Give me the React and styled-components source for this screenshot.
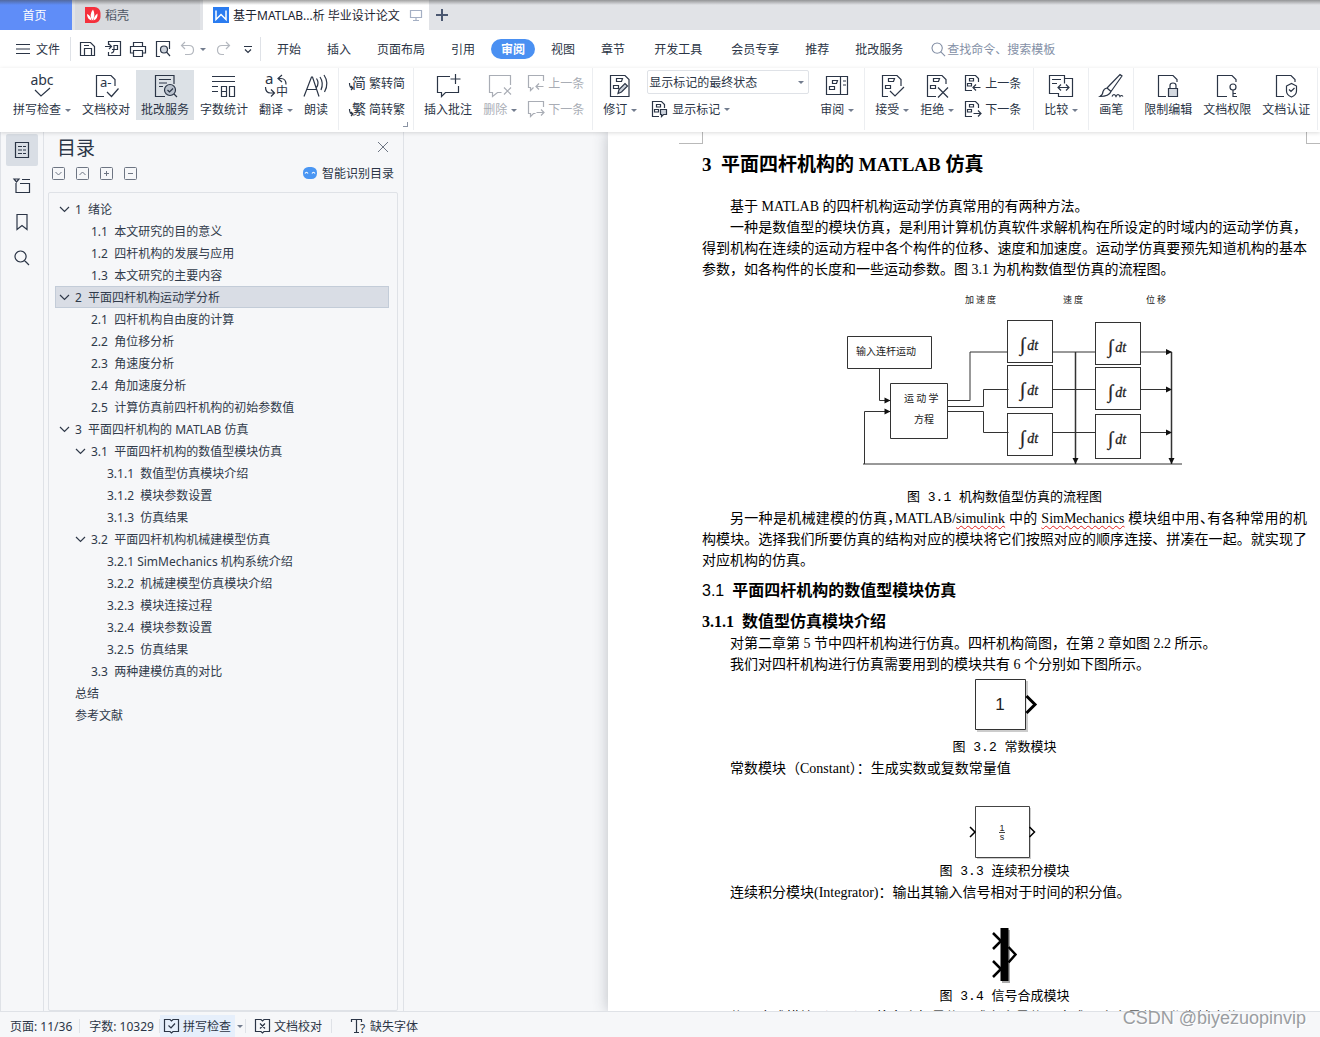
import React, { useState } from "react";
import styled, { createGlobalStyle } from "styled-components";

const ink = "#2b3546";
const line = "#dfe2e7";
const panelBg = "#f6f7f9";

const GlobalStyle = createGlobalStyle`
    * {
        box-sizing: border-box;
    }

    body {
        margin: 0;
        font-family: "Noto Sans", "Noto Sans CJK SC", sans-serif;
        font-size: 12px;
        color: ${ink};
    }

    button, input, select {
        font: inherit;
        color: inherit;
        margin: 0;
        padding: 0;
        border: 0;
        background: none;
    }
`;

const Window = styled.div`
    display: flex;
    flex-direction: column;
    height: 100vh;
    overflow: hidden;
    background: ${panelBg};
`;

const Icon = styled.svg`
    display: block;
    flex: none;
    fill: none;
    stroke: currentColor;
    stroke-width: ${({ $weight }) => $weight || 1.2};
    overflow: visible;

    text {
        fill: currentColor;
        stroke: none;
    }
`;

/* ---------- tabs ---------- */

const TabBar = styled.div`
    position: relative;
    display: flex;
    gap: 3px;
    height: 30px;
    flex: none;
    background: #e1e3e7;

    &::after {
        content: "";
        position: absolute;
        inset: 0 0 auto 0;
        height: 5px;
        background: linear-gradient(rgba(70, 70, 70, 0.5), rgba(70, 70, 70, 0));
        pointer-events: none;
    }
`;

const Tab = styled.button`
    display: flex;
    align-items: center;
    gap: 4px;
    padding: 0 7px 0 10px;
    width: ${({ $width }) => $width}px;
    white-space: nowrap;
    text-align: left;
    background: ${({ $active }) => ($active ? "#fff" : "#d8dade")};
    color: ${({ $active }) => ($active ? "#1c2430" : "#4d5563")};

    span {
        flex: 1;
    }
`;

const HomeTab = styled(Tab)`
    justify-content: center;
    padding: 0 6px 0 3px;
    background: #5f8df8;
    color: #fff;
`;

const NewTab = styled.button`
    display: flex;
    align-items: center;
    padding: 0 4px;
    color: #4b5871;
`;

/* ---------- menu ---------- */

const MenuBar = styled.div`
    display: flex;
    align-items: center;
    height: 38px;
    flex: none;
    background: #fff;
`;

const FileButton = styled.button`
    display: flex;
    align-items: center;
    gap: 6px;
    padding: 0 10px 0 16px;
    height: 24px;
    border-right: 1px solid ${line};
`;

const QuickBar = styled.div`
    display: flex;
    align-items: center;
    gap: 9px;
    padding: 0 4px 0 9px;
    height: 24px;
    border-right: 1px solid ${line};

    button {
        color: ${ink};
    }

    button:disabled {
        color: #b4b8bf;
    }
`;

const UndoGroup = styled.div`
    display: flex;
    align-items: center;
    gap: 4px;
`;

const Menus = styled.nav`
    display: flex;
    gap: 6px;
    padding-left: 6px;
`;

const MenuItem = styled.button`
    height: 20px;
    line-height: 22px;
    padding: 0 ${({ $wide }) => ($wide ? 13 : 10)}px;
    border-radius: 10px;
    white-space: nowrap;
    background: ${({ $active }) => ($active ? "#4a90f2" : "none")};
    color: ${({ $active }) => ($active ? "#fff" : ink)};
    font-weight: ${({ $active }) => ($active ? 700 : 400)};
`;

const Search = styled.label`
    display: flex;
    align-items: center;
    gap: 1px;
    padding-left: 18px;
    color: #8490a6;

    input {
        width: 140px;
        outline: none;
    }

    input::placeholder {
        color: #8490a6;
        opacity: 1;
    }
`;

/* ---------- ribbon ---------- */

const Ribbon = styled.div`
    position: relative;
    z-index: 1;
    display: flex;
    height: 64px;
    flex: none;
    padding: 0 0 2px 3px;
    background: #fff;
    box-shadow: 0 1px 4px rgba(0, 0, 0, 0.14);
`;

const Group = styled.div`
    position: relative;
    display: flex;
    align-items: flex-start;
    gap: 1px;
    padding: 2px ${({ $end }) => $end || 5}px 0 5px;
    border-right: 1px solid #eceef1;
`;

const BigButton = styled.button`
    display: flex;
    flex-direction: column;
    align-items: center;
    padding: 4px 5px 0;
    height: 50px;
    white-space: nowrap;
    background: ${({ $active }) => ($active ? "#dce1e6" : "none")};

    &:disabled {
        color: #a9adb5;
    }
`;

const Label = styled.span`
    display: flex;
    align-items: center;
    gap: 4px;
    line-height: 24px;
`;

const Stack = styled.div`
    display: flex;
    flex-direction: column;
`;

const SmallButton = styled.button`
    display: flex;
    align-items: center;
    gap: 4px;
    height: 26px;
    padding: 0 5px;
    white-space: nowrap;

    &:disabled {
        color: #a9adb5;
    }
`;

const MarkupStack = styled(Stack)`
    padding: 0 5px 0 4px;
`;

const SelectBox = styled.div`
    display: flex;
    align-items: center;
    height: 24px;
    margin-bottom: 2px;
    padding-right: 4px;
    border: 1px solid ${line};
    border-radius: 2px;

    select {
        appearance: none;
        width: 150px;
        padding-left: 1px;
        outline: none;
    }
`;

const Triangle = styled.i`
    border: 3px solid transparent;
    border-top-color: #727c8e;
    border-bottom-width: 0;
`;

const Launcher = styled.i`
    position: absolute;
    right: 5px;
    bottom: 3px;
    width: 5px;
    height: 5px;
    border: solid #8a93a3;
    border-width: 0 1px 1px 0;
`;

/* ---------- workspace ---------- */

const Workspace = styled.div`
    display: flex;
    flex: 1;
    min-height: 0;
`;

const Rail = styled.div`
    display: flex;
    flex-direction: column;
    gap: 4px;
    width: 44px;
    padding: 2px 5px;
    border: solid ${line};
    border-width: 0 1px;
`;

const RailButton = styled.button`
    display: grid;
    place-items: center;
    width: 32px;
    height: 32px;
    border-radius: 2px;
    background: ${({ $active }) => ($active ? "#d9dee5" : "none")};
`;

const Panel = styled.aside`
    display: flex;
    flex-direction: column;
    width: 360px;
    flex: none;
    padding: 0 5px 0 4px;
    border-right: 1px solid ${line};
`;

const PanelHead = styled.div`
    display: flex;
    justify-content: space-between;
    align-items: center;
    height: 30px;
    padding: 0 10px 0 9px;

    h2 {
        margin: 0;
        font-size: 19px;
        font-weight: 400;
    }
`;

const PanelTools = styled.div`
    display: flex;
    align-items: center;
    gap: 11px;
    height: 22px;
    margin-bottom: 8px;
    padding: 0 4px;
    color: #6d7583;
`;

const SmartButton = styled.button`
    display: flex;
    align-items: center;
    gap: 5px;
    margin-left: auto;
    color: ${ink};
`;

const TocBox = styled.nav`
    flex: 1;
    padding: 5px 8px 6px 6px;
    border: 1px solid ${line};
    border-radius: 2px;
`;

const TocList = styled.ul`
    margin: 0;
    padding: 0;
    list-style: none;
`;

const TocRow = styled.button`
    display: flex;
    align-items: center;
    gap: 6px;
    width: 100%;
    height: 22px;
    padding-left: ${({ $level }) => 3 + $level * 16}px;
    border: 1px solid ${({ $active }) => ($active ? "#c3ccd8" : "transparent")};
    background: ${({ $active }) => ($active ? "#d9dde5" : "none")};
    white-space: pre;
    color: #303a4a;
`;

const Canvas = styled.main`
    display: flex;
    flex: 1;
    min-width: 0;
    padding-left: 204px;
    overflow: hidden;
`;

const Page = styled.article`
    flex: 1;
    min-width: 0;
    background: #fff;
    box-shadow: 0 0 14px rgba(50, 60, 75, 0.3);
    color: #000;
    font-family: "Liberation Serif", "Noto Sans CJK SC", serif;
    font-size: 14px;
    line-height: 21px;
`;

const Corners = styled.div`
    display: flex;
    justify-content: space-between;
    padding-left: 71px;

    i {
        width: 24px;
        height: 12px;
        border: solid #b9b9b9;
        border-width: 0 1px 1px 0;
    }

    i + i {
        width: 14px;
        border-width: 0 0 1px 1px;
    }
`;

const Sheet = styled.div`
    padding: 0 13px 0 94px;
`;

const Title = styled.h1`
    margin: 0 0 10px;
    font-size: 19px;
    line-height: 42px;
    white-space: pre;
`;

const Section = styled.h2`
    margin: 0;
    font-size: 16px;
    line-height: 40px;
    white-space: pre;

    span {
        font-family: "Liberation Sans", sans-serif;
        font-weight: 400;
    }
`;

const SubSection = styled.h3`
    margin: 0;
    font-size: 16px;
    line-height: 22px;
    white-space: pre;
`;

const Para = styled.p`
    margin: 0;
    text-indent: 28px;
    text-align: justify;
`;

const Misspelt = styled.span`
    text-decoration: underline wavy #e02020 1px;
    text-underline-offset: 2px;
`;

// half-width punctuation inside a crowded line
const Tight = styled.span`
    font-feature-settings: "halt";
`;

const Figure = styled.figure`
    margin: 0;

    svg {
        display: block;
        margin: 0 auto;
        overflow: visible;
    }

    figcaption {
        text-align: center;
        font-family: "Liberation Mono", "Noto Sans CJK SC", monospace;
        font-size: 13px;
    }
`;

/* ---------- status bar ---------- */

const StatusBar = styled.footer`
    display: flex;
    align-items: center;
    height: 26px;
    flex: none;
    padding: 3px 0 0 6px;
    border-top: 1px solid ${line};
    background: ${panelBg};
    position: relative;
    white-space: nowrap;
`;

const StatusItem = styled.button`
    display: flex;
    align-items: center;
    gap: 3px;
    height: 22px;
    padding: 0 ${({ $narrow }) => ($narrow ? 2 : 4)}px;
    background: ${({ $active }) => ($active ? "#e6effb" : "none")};
`;

const StatusRule = styled.i`
    width: 1px;
    height: 14px;
    margin: 0 ${({ $end }) => $end}px 0 ${({ $start }) => $start}px;
    background: ${line};
`;

const Watermark = styled.div`
    position: absolute;
    right: 14px;
    bottom: 8px;
    font-family: "Liberation Sans", sans-serif;
    font-size: 18px;
    line-height: 22px;
    color: #9a9da1;
    text-shadow: 1px 1px 0 #fff;
`;

/* ---------- icon drawings ---------- */

const sans = { fontFamily: "Noto Sans, Noto Sans CJK SC, sans-serif" };

const marks = (
    <path d="M8.5 4.5h6l-1 3h-5zM5.5 11.5h5v3h-5z" />
);

const bigIcons = {
    spell: (
        <>
            <text x="12" y="11" fontSize="14" textAnchor="middle" style={sans}>abc</text>
            <path d="M5 16l6 6L20 14" />
        </>
    ),
    proof: (
        <>
            <path d="M10 22.500H2.500v-21H17l4 4V12" />
            <text x="6" y="13" fontSize="13" style={sans}>a-</text>
            <path d="M13 18l4.500 4.500 7-8" />
        </>
    ),
    review: (
        <>
            <path d="M12 22.500H2.500v-21h18.500V10M6 5.500h12M6 9h8M6 12.500h4" />
            <circle cx="17" cy="16" r="5.500" fill="#b9c1cc" />
            <path d="M14.500 16l2 2 3.500-3.500M21 20l3 3" />
        </>
    ),
    count: (
        <path d="M0 2.500h23M0 7.500h23M0 12.500h6M0 17.500h6M9.500 12.500h5v10h-5zM9.500 17.500h5M17.500 12.500h5v10h-5z" />
    ),
    translate: (
        <>
            <text x="1" y="10" fontSize="15" style={sans}>a</text>
            <text x="12" y="22" fontSize="12" style={sans}>中</text>
            <path d="M18 1l-4 3.500 4 3.500M14 4.500h3q5 0 5 6M1.500 13q0 6 5 6h3M7 15.500l3.500 3.500L7 22.500" />
        </>
    ),
    read: (
        <path d="M0 22.500L7.500 3h1L15 22.500M3 15.500h9.500M12.500 4.500q3 4.500 0 9M16 3q4 6 1 13M20 1q5.500 8 .500 17" />
    ),
    insert: (
        <path d="M14 2.500H1.500v16h4v4l4-4h13V12M19.500 0v10M14.500 5h10" />
    ),
    remove: (
        <path d="M22.500 11V1.500h-21v17h3v4l5-4h4M16 13.500l7 7M23 13.500l-7 7" />
    ),
    revise: (
        <>
            <path d="M2.500 1.500H17l4 4v17H2.500z" />
            {marks}
            <path d="M10 19.500l1-4 6-6 2.500 2.500-6 6z" fill="#cdd3dc" />
        </>
    ),
    pane: (
        <path d="M1.500 2.500h21v18h-21zM15.500 2.500v18M7.500 6.500h5l-1 3h-4zM4.500 12.500h5v3h-5zM18 7h3M18 11h3" />
    ),
    accept: (
        <>
            <path d="M8 22.500H2.500v-21H17l4 4V12" />
            {marks}
            <path d="M10 17l5 5 9-9" />
        </>
    ),
    reject: (
        <>
            <path d="M11 22.500H2.500v-21H17l4 4V10" />
            {marks}
            <path d="M13 13.500l10 10M23 13.500l-10 10" />
        </>
    ),
    compare: (
        <path d="M15.500 4.500v-3H.500v18h9v3h14v-18h-8v5M3 5.500h9M3 9.500h5M9 13.500h11M12 10.500l-3 3 3 3M17 10.500l3 3-3 3" />
    ),
    brush: (
        <path d="M8 14L21 .500l2 1.500L12 17.500M8 14l4 3.500q-2 5-11 5 3-2 3-5 1-3 4-3.500zM13 22.500q2-4 4 0 2-4 4 0 1.500-2 3 0" />
    ),
    lock: (
        <>
            <path d="M10 22.500H2.500v-21H17l4 4V8" />
            <path d="M12.500 14.500h9v8h-9z" fill="#d4d9e0" />
            <path d="M14 14v-2.500q0-2.500 3-2.500t3 2.500V14" />
        </>
    ),
    key: (
        <>
            <path d="M12 22.500H2.500v-21H17l4 4V8" />
            <circle cx="18" cy="13" r="3" />
            <path d="M18 16v6.500h4M18 19.500h3" />
        </>
    ),
    shield: (
        <>
            <path d="M10 22.500H2.500v-21H17l4 4V8" />
            <path d="M12.500 12l5-2.500 5 2.500v5q0 4-5 6-5-2-5-6zM15 15.500l2 2 3.500-3.500" />
        </>
    ),
};

const smallIcons = {
    toSimple: (
        <>
            <text x="3" y="13" fontSize="14" style={sans}>简</text>
            <path d="M.500 8q0 5 3 5M2 11l2 2-2 2" />
        </>
    ),
    toTrad: (
        <>
            <text x="3" y="13" fontSize="14" style={sans}>繁</text>
            <path d="M.500 8q0 5 3 5M2 11l2 2-2 2" />
        </>
    ),
    prevNote: <path d="M15.500 6V.500H.500v12h2v3l3-3M15.500 11.500h-7M11 8.500l-3 3 3 3" />,
    nextNote: <path d="M15.500 6V.500H.500v12h2v3l3-3h2M8.500 11.500h7M13 8.500l3 3-3 3" />,
    prevMark: <path d="M7 15.500H.500V.500h10l3 3V7M4.500 3.500h4v2.500h-4zM2.500 8.500h4V11h-4zM15.500 12.500h-7M11 9.500l-3 3 3 3" />,
    nextMark: <path d="M7 15.500H.500V.500h10l3 3V7M4.500 3.500h4v2.500h-4zM2.500 8.500h4V11h-4zM8.500 12.500h7M13 9.500l3 3-3 3" />,
    showMark: (
        <>
            <path d="M7 15.500H.500V.500h9l3 3V7M4.500 3.500h4v2.500h-4zM2.500 8.500h4V11h-4z" />
            <path d="M8.500 8.500h6v5h-3l-2 2v-2h-1z" fill="#cdd3dc" />
        </>
    ),
    save: <path d="M.500 1.500h10l4 4v9h-14zM4.500 14V7.500h7V14M4 4.500h5" />,
    exportPdf: <path d="M3.500 4V.500h12v14h-12V11M0 5.500h6M4 3l2.500 2.500L4 8M6 12q3 0 3-4V4.500h3.500v4H7" />,
    print: <path d="M3.500 5V1.500h9V5M3.500 12h-3V5.500h15V12h-3M3.500 9.500h9v6h-9z" />,
    preview: (
        <>
            <path d="M5 15.500H1.500v-15H14.500V8" />
            <circle cx="9" cy="8.500" r="3.500" fill="#cdd3dc" />
            <path d="M11.500 11l3.500 4" />
        </>
    ),
    undo: <path d="M5 1L1.500 4.500 5 8M1.500 4.500H9q4.500 0 4.500 4.500T9 13.500H5" />,
    redo: <path d="M11 1l3.500 3.500L11 8M14.500 4.500H7q-4.500 0-4.500 4.500T7 13.500h2" />,
    more: <path d="M4 5.500h8M5 8.500l3 3 3-3" />,
    search: <path d="M10.500 10.500l4.500 4.500M6.500 1a5.500 5.500 0 1 0 .100 0z" />,
    outline: <path d="M1.500.500h13v15h-13zM4 4.500h4M9 4.500h3M4 8h4M9 8h3M4 11.500h4M9 11.500h3" />,
    chapter: <path d="M0 1h5L2.500 4zM8 1.500h8M2 5v9.500h13.500v-9h-9.500" />,
    bookmark: <path d="M3 .500h10v15l-5-4-5 4z" />,
    checkBook: <path d="M6 1.500H.500v12H6l1.500 1.500L9 13.500h5.500v-12H9L7.500 3zM4.500 7.500l2.500 2.500 4-4.500" />,
    crossBook: <path d="M6 1.500H.500v12H6l1.500 1.500L9 13.500h5.500v-12H9L7.500 3zM5 5.500l5 5M10 5.500l-5 5" />,
    missingFont: (
        <>
            <path d="M.500 4V1.500h10V4M5.500 1.500v13M3 14.500h5" />
            <text x="9" y="15" fontSize="12" style={sans}>?</text>
        </>
    ),
};

const Big = ({ name }) => (
    <Icon width="24" height="24" viewBox="0 0 24 24" aria-hidden="true">{bigIcons[name]}</Icon>
);

const Small = ({ name, size = 16 }) => (
    <Icon width={size} height={size} viewBox="0 0 16 16" aria-hidden="true">{smallIcons[name]}</Icon>
);

const Chevron = () => (
    <Icon width="10" height="10" viewBox="0 0 10 10" aria-hidden="true">
        <path d="M1 3l4.500 4.500L10 3" />
    </Icon>
);

const squareMarks = ["M3.500 5l3 3 3-3", "M3.500 8l3-3 3 3", "M6.500 4v5M4 6.500h5", "M4 6.500h5"];
const squareNames = ["全部展开", "全部折叠", "展开一级", "折叠一级"];

/* ---------- parts ---------- */

const Tool = ({ icon, text, menu, active, disabled }) => (
    <BigButton $active={active} disabled={disabled}>
        <Big name={icon} />
        <Label>{text}{menu && <Triangle />}</Label>
    </BigButton>
);

const MiniTool = ({ icon, text, menu, disabled }) => (
    <SmallButton disabled={disabled}>
        <Small name={icon} />
        {text}
        {menu && <Triangle />}
    </SmallButton>
);

const Tabs = () => (
    <TabBar>
        <HomeTab $width={72}>首页</HomeTab>
        <Tab $width={125}>
            <Icon width="16" height="16" viewBox="0 0 16 16" aria-hidden="true">
                <path d="M0 0h9.500a6 6 0 0 1 6 6v4a6 6 0 0 1-6 6H0z" fill="#f5303c" stroke="none" />
                <path d="M7.500 13.500Q3.500 8 8 2.500 11 8 7.500 13.500zM6.500 13.500Q2 12 2 7q4 1.500 4.500 6.500zM8.500 13.500q0-4 4-7 .500 5.500-4 7z" fill="#fff" stroke="none" />
            </Icon>
            <span>稻壳</span>
        </Tab>
        <Tab $width={226} $active>
            <Icon width="16" height="16" viewBox="0 0 16 16" $weight={1.5} aria-hidden="true">
                <path d="M0 0h16v16H0z" fill="#2b7cf0" stroke="none" />
                <path d="M3 3.500v9l5-5 5 5v-9" stroke="#fff" />
            </Icon>
            <span>基于MATLAB...析 毕业设计论文</span>
            <Icon width="12" height="12" viewBox="0 0 12 12" color="#a5b0c4" aria-hidden="true">
                <path d="M.500 1.500h11v7H.500zM6 8.500v3M3 11.500h6" />
            </Icon>
        </Tab>
        <NewTab aria-label="新建">
            <Icon width="12" height="12" viewBox="0 0 12 12" $weight={2} aria-hidden="true">
                <path d="M6 0v12M0 6h12" />
            </Icon>
        </NewTab>
    </TabBar>
);

const menuNames = ["开始", "插入", "页面布局", "引用", "审阅", "视图", "章节", "开发工具", "会员专享", "推荐", "批改服务"];

const Menu = () => {
    const [current, setCurrent] = useState("审阅");

    return (
        <MenuBar>
            <FileButton>
                <Icon width="14" height="14" viewBox="0 0 14 14" aria-hidden="true">
                    <path d="M0 2.500h14M0 7h14M0 11.500h14" />
                </Icon>
                文件
            </FileButton>
            <QuickBar>
                <button aria-label="保存"><Small name="save" /></button>
                <button aria-label="输出为PDF"><Small name="exportPdf" /></button>
                <button aria-label="打印"><Small name="print" /></button>
                <button aria-label="打印预览"><Small name="preview" /></button>
                <UndoGroup>
                    <button aria-label="撤销" disabled><Small name="undo" /></button>
                    <Triangle />
                </UndoGroup>
                <button aria-label="恢复" disabled><Small name="redo" /></button>
                <button aria-label="更多"><Small name="more" /></button>
            </QuickBar>
            <Menus>
                {menuNames.map((name) => (
                    <MenuItem
                        key={name}
                        $active={name === current}
                        $wide={name === "开发工具"}
                        onClick={() => setCurrent(name)}
                    >
                        {name}
                    </MenuItem>
                ))}
            </Menus>
            <Search>
                <Small name="search" size={15} />
                <input placeholder="查找命令、搜索模板" aria-label="查找命令、搜索模板" />
            </Search>
        </MenuBar>
    );
};

const ReviewRibbon = () => (
    <Ribbon>
        <Group>
            <Tool icon="spell" text="拼写检查" menu />
            <Tool icon="proof" text="文档校对" />
            <Tool icon="review" text="批改服务" active />
            <Tool icon="count" text="字数统计" />
            <Tool icon="translate" text="翻译" menu />
            <Tool icon="read" text="朗读" />
        </Group>
        <Group $end={3}>
            <Stack>
                <MiniTool icon="toSimple" text="繁转简" />
                <MiniTool icon="toTrad" text="简转繁" />
            </Stack>
            <Launcher />
        </Group>
        <Group $end={3}>
            <Tool icon="insert" text="插入批注" />
            <Tool icon="remove" text="删除" menu disabled />
            <Stack>
                <MiniTool icon="prevNote" text="上一条" disabled />
                <MiniTool icon="nextNote" text="下一条" disabled />
            </Stack>
        </Group>
        <Group>
            <Tool icon="revise" text="修订" menu />
            <MarkupStack>
                <SelectBox>
                    <select aria-label="标记状态">
                        <option>显示标记的最终状态</option>
                        <option>最终状态</option>
                        <option>显示标记的原始状态</option>
                        <option>原始状态</option>
                    </select>
                    <Triangle />
                </SelectBox>
                <MiniTool icon="showMark" text="显示标记" menu />
            </MarkupStack>
            <Tool icon="pane" text="审阅" menu />
        </Group>
        <Group $end={7}>
            <Tool icon="accept" text="接受" menu />
            <Tool icon="reject" text="拒绝" menu />
            <Stack>
                <MiniTool icon="prevMark" text="上一条" />
                <MiniTool icon="nextMark" text="下一条" />
            </Stack>
        </Group>
        <Group>
            <Tool icon="compare" text="比较" menu />
        </Group>
        <Group>
            <Tool icon="brush" text="画笔" />
        </Group>
        <Group $end={2}>
            <Tool icon="lock" text="限制编辑" />
            <Tool icon="key" text="文档权限" />
            <Tool icon="shield" text="文档认证" />
        </Group>
    </Ribbon>
);

// [level of the text, title, has children]
const toc = [
    [0, "1  绪论", true],
    [2, "1.1  本文研究的目的意义"],
    [2, "1.2  四杆机构的发展与应用"],
    [2, "1.3  本文研究的主要内容"],
    [0, "2  平面四杆机构运动学分析", true],
    [2, "2.1  四杆机构自由度的计算"],
    [2, "2.2  角位移分析"],
    [2, "2.3  角速度分析"],
    [2, "2.4  角加速度分析"],
    [2, "2.5  计算仿真前四杆机构的初始参数值"],
    [0, "3  平面四杆机构的 MATLAB 仿真", true],
    [1, "3.1  平面四杆机构的数值型模块仿真", true],
    [3, "3.1.1  数值型仿真模块介绍"],
    [3, "3.1.2  模块参数设置"],
    [3, "3.1.3  仿真结果"],
    [1, "3.2  平面四杆机构机械建模型仿真", true],
    [3, "3.2.1 SimMechanics 机构系统介绍"],
    [3, "3.2.2  机械建模型仿真模块介绍"],
    [3, "3.2.3  模块连接过程"],
    [3, "3.2.4  模块参数设置"],
    [3, "3.2.5  仿真结果"],
    [2, "3.3  两种建模仿真的对比"],
    [1, "总结"],
    [1, "参考文献"],
];

const Outline = () => {
    const [selected, setSelected] = useState(4);

    return (
        <Panel>
            <PanelHead>
                <h2>目录</h2>
                <button aria-label="关闭">
                    <Icon width="10" height="10" viewBox="0 0 10 10" $weight={1} color="#6d7583" aria-hidden="true">
                        <path d="M0 0l10 10M10 0L0 10" />
                    </Icon>
                </button>
            </PanelHead>
            <PanelTools>
                {squareMarks.map((d, i) => (
                    <button key={squareNames[i]} aria-label={squareNames[i]}>
                        <Icon width="13" height="13" viewBox="0 0 13 13" $weight={1} aria-hidden="true">
                            <rect x=".5" y=".5" width="12" height="12" rx="1" />
                            <path d={d} />
                        </Icon>
                    </button>
                ))}
                <SmartButton>
                    <Icon width="14" height="12" viewBox="0 0 14 12" aria-hidden="true">
                        <rect width="14" height="12" rx="5.500" fill="#4a96f3" stroke="none" />
                        <path d="M2 6.500q1.500-2.500 3 0M9 6.500q1.500-2.500 3 0" stroke="#fff" />
                    </Icon>
                    智能识别目录
                </SmartButton>
            </PanelTools>
            <TocBox aria-label="目录">
                <TocList>
                    {toc.map(([level, title, open], i) => (
                        <li key={title}>
                            <TocRow $level={level} $active={i === selected} onClick={() => setSelected(i)}>
                                {open && <Chevron />}
                                {title}
                            </TocRow>
                        </li>
                    ))}
                </TocList>
            </TocBox>
        </Panel>
    );
};

const integrators = [
    [183, 41, 42], [183, 86, 42], [183, 134, 42],
    [271, 43, 42], [271, 88, 42], [271, 135, 44],
];

const arrowHeads = [
    "M65.500 120.500l-6-3v6z", "M65.500 131.500l-6-3v6z",
    "M347 72l-6-3v6z", "M347 109.500l-6-3v6z", "M347 152.500l-6-3v6z",
    "M250.500 184l-3-6h6z", "M346.500 184l-3-6h6z",
];

const FlowChart = () => (
    <svg width="360" height="207" viewBox="0 0 360 207" fontFamily="Noto Sans CJK SC, sans-serif" fontSize="10" fill="#222">
        <g fontSize="9">
            <text x="140" y="23">加 速 度</text>
            <text x="238" y="23">速 度</text>
            <text x="321" y="23">位 移</text>
        </g>
        <g fill="none" stroke="#333">
            <path d="M22.500 56.500h84v32h-84zM65.500 103.500h57v55h-57z" />
            {integrators.map(([x, y, h]) => (
                <rect key={`${x}-${y}`} x={x - 0.5} y={y - 0.5} width="45" height={h} />
            ))}
            <path d="M54.500 88.500v32h11M65.500 131.500h-26v52.500M38 184h319" />
            <path d="M122.500 120.500h22.500V72h38M122.500 126.500h36v-17h25M122.500 131.500h36v21h25" />
            <path d="M227.500 72h43M227.500 109.500h43M227.500 152.500h43M315.500 72h31M315.500 109.500h31M315.500 152.500h31" />
            <path d="M250.500 72v112M346.500 72v112" strokeWidth="1.500" />
        </g>
        {arrowHeads.map((d) => <path key={d} d={d} fill="#111" />)}
        <text x="31" y="75">输入连杆运动</text>
        <text x="79" y="122">运 动 学</text>
        <text x="89" y="143">方程</text>
        {integrators.map(([x, y]) => (
            <text key={`dt-${x}-${y}`} x={x + 12} y={y + 30} fontFamily="Liberation Serif, serif" fontSize="14" fontStyle="italic" stroke="#222" strokeWidth=".3">
                <tspan fontSize="19">∫</tspan>
                <tspan dx="2" dy="-1">dt</tspan>
            </text>
        ))}
    </svg>
);

const ConstantBlock = () => (
    <svg width="80" height="62" viewBox="0 0 80 62" fontFamily="Liberation Sans, sans-serif">
        <path d="M12 6h51v51H12z" fill="#ccc" />
        <path d="M10.500 4.500h50v50h-50z" fill="#fff" stroke="#333" />
        <path d="M61.500 21l8.500 8.500-8.500 8.500" fill="#fff" stroke="#000" strokeWidth="3" />
        <text x="35" y="35" fontSize="17" textAnchor="middle" fill="#222">1</text>
    </svg>
);

const IntegratorBlock = () => (
    <svg width="80" height="82" viewBox="0 0 80 82" fontFamily="Liberation Sans, sans-serif" fontSize="9" fill="#222">
        <path d="M12 29h54v51H12z" fill="#ccc" />
        <path d="M10.500 27.500h54v51h-54z" fill="#fff" stroke="#444" />
        <path d="M5 48l5 5-5 5M64.500 48l5 5-5 5" fill="none" stroke="#000" strokeWidth="1.500" />
        <text x="37" y="52" textAnchor="middle">1</text>
        <path d="M34 53.500h6" stroke="#444" />
        <text x="37" y="61" textAnchor="middle">s</text>
    </svg>
);

const MuxBlock = () => (
    <svg width="80" height="83" viewBox="0 0 80 83">
        <path d="M37 27h8v53h-8z" fill="#aaa" />
        <path d="M35.500 25h8v53h-8z" />
        <path d="M28 30l8 8-8 8M28 58l8 8-8 8M43.500 44l7 7.500-7 8" fill="none" stroke="#000" strokeWidth="2.500" />
    </svg>
);

const Paper = () => (
    <Page>
        <Corners><i /><i /></Corners>
        <Sheet>
            <Title>3  平面四杆机构的 MATLAB 仿真</Title>
            <Para>基于 MATLAB 的四杆机构运动学仿真常用的有两种方法。</Para>
            <Para>
                一种是数值型的模块仿真，是利用计算机仿真软件求解机构在所设定的时域内的运动学仿真，得到机构在连续的运动方程中各个构件的位移、速度和加速度。运动学仿真要预先知道机构的基本参数，如各构件的长度和一些运动参数。图 3.1 为机构数值型仿真的流程图。
            </Para>
            <Figure>
                <FlowChart />
                <figcaption>图 3.1 机构数值型仿真的流程图</figcaption>
            </Figure>
            <Para>
                <Tight>另一种是机械建模的仿真，MATLAB/</Tight><Misspelt>simulink</Misspelt> 中的 <Misspelt>SimMechanics</Misspelt><Tight> 模块组中用、有各种常用的机</Tight>构模块。选择我们所要仿真的结构对应的模块将它们按照对应的顺序连接、拼凑在一起。就实现了对应机构的仿真。
            </Para>
            <Section><span>3.1</span>  平面四杆机构的数值型模块仿真</Section>
            <SubSection>3.1.1  数值型仿真模块介绍</SubSection>
            <Para>对第二章第 5 节中四杆机构进行仿真。四杆机构简图，在第 2 章如图 2.2 所示。</Para>
            <Para>我们对四杆机构进行仿真需要用到的模块共有 6 个分别如下图所示。</Para>
            <Figure>
                <ConstantBlock />
                <figcaption>图 3.2 常数模块</figcaption>
            </Figure>
            <Para>常数模块（Constant）：生成实数或复数常量值</Para>
            <Figure>
                <IntegratorBlock />
                <figcaption>图 3.3 连续积分模块</figcaption>
            </Figure>
            <Para>连续积分模块(Integrator)：输出其输入信号相对于时间的积分值。</Para>
            <Figure>
                <MuxBlock />
                <figcaption>图 3.4 信号合成模块</figcaption>
            </Figure>
            <Para>信号合成模块（Mux）：将多个标量信号或者向量信号合成一个向量信号作为输出信号。</Para>
        </Sheet>
    </Page>
);

const railButtons = [["outline", "目录"], ["chapter", "章节"], ["bookmark", "书签"], ["search", "查找"]];

const App = () => (
    <Window>
        <GlobalStyle />
        <Tabs />
        <Menu />
        <ReviewRibbon />
        <Workspace>
            <Rail>
                {railButtons.map(([icon, name]) => (
                    <RailButton key={icon} aria-label={name} $active={icon === "outline"}>
                        <Small name={icon} />
                    </RailButton>
                ))}
            </Rail>
            <Outline />
            <Canvas>
                <Paper />
            </Canvas>
        </Workspace>
        <StatusBar>
            <StatusItem>页面: 11/36</StatusItem>
            <StatusRule $start={3} $end={5} />
            <StatusItem>字数: 10329</StatusItem>
            <StatusRule $start={1} $end={0} />
            <StatusItem $active><Small name="checkBook" />拼写检查</StatusItem>
            <StatusItem $narrow aria-label="拼写检查选项"><Triangle /></StatusItem>
            <StatusRule $start={0} $end={5} />
            <StatusItem><Small name="crossBook" />文档校对</StatusItem>
            <StatusRule $start={5} $end={15} />
            <StatusItem><Small name="missingFont" />缺失字体</StatusItem>
            <Watermark>CSDN @biyezuopinvip</Watermark>
        </StatusBar>
    </Window>
);

export default App;
